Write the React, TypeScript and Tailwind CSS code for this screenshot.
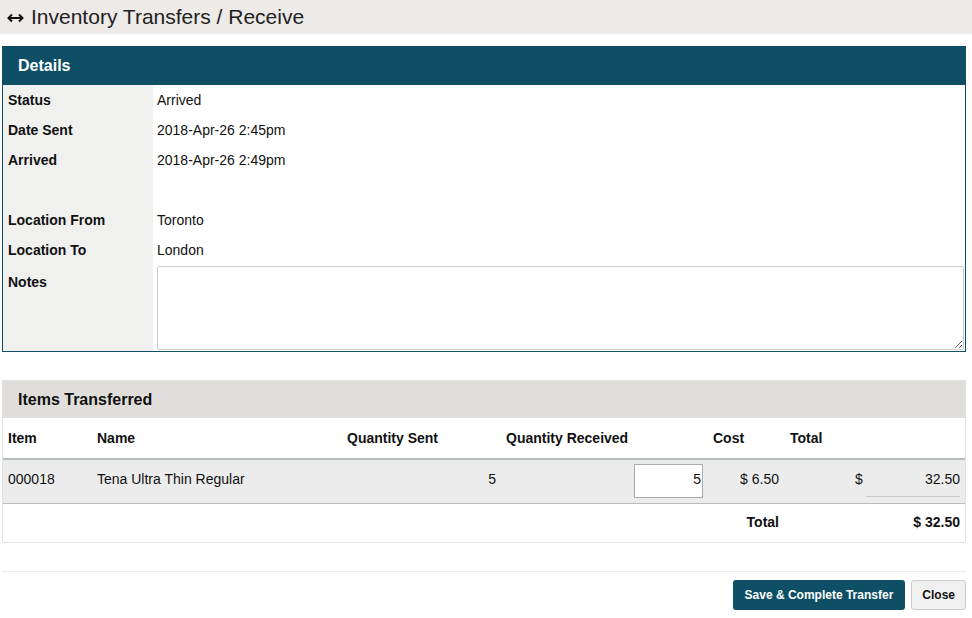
const details: [string, string][] = [
  ["Status", "Arrived"],
  ["Date Sent", "2018-Apr-26 2:45pm"],
  ["Arrived", "2018-Apr-26 2:49pm"],
  ["", ""],
  ["Location From", "Toronto"],
  ["Location To", "London"],
];

function SwapArrow() {
  return (
    <svg width="17" height="10" viewBox="0 0 17 10" className="mr-[7px] mt-[2px]">
      <path d="M1.5 5h14M5 1.5L1.5 5 5 8.5M12 1.5l3.5 3.5L12 8.5" fill="none" stroke="#111" strokeWidth="2" />
    </svg>
  );
}

export default function App() {
  return (
    <div className="w-[972px] h-[618px] bg-white text-[14px] text-[#111] font-['Liberation_Sans',Arial,sans-serif]">
      {/* Page title */}
      <div className="h-[34px] bg-[#edeae7] flex items-center pl-[7px] text-[21px] text-[#222]">
        <SwapArrow />
        Inventory Transfers / Receive
      </div>

      {/* Details panel */}
      <div className="mt-[12px] ml-[2px] w-[964px] border border-[#0e4f66]">
        <div className="h-[38px] bg-[#0e4f66] flex items-center pl-[15px] text-white font-bold text-[16px]">
          Details
        </div>
        <div className="flex">
          <div className="w-[150px] bg-[#f0f0ef] shrink-0">
            {details.map(([label], i) => (
              <div key={i} className="h-[30px] flex items-center pl-[5px] font-bold">
                {label}
              </div>
            ))}
            <div className="h-[86px] pl-[5px] pt-[7px] font-bold">Notes</div>
          </div>
          <div className="flex-1 pl-[4px] pr-[2px]">
            {details.map(([, value], i) => (
              <div key={i} className="h-[30px] flex items-center">
                {value}
              </div>
            ))}
            <textarea className="block w-[807px] h-[84px] mt-[1px] mb-[1px] border border-[#ccc] rounded-[2px] resize-y" />
          </div>
        </div>
      </div>

      {/* Items panel */}
      <div className="mt-[28px] ml-[2px] w-[964px] border border-[#e2e2e2]">
        <div className="h-[37px] bg-[#dfdeda] flex items-center pl-[15px] font-bold text-[16px]">
          Items Transferred
        </div>
        <table className="w-full border-collapse">
          <thead>
            <tr className="h-[41px] border-b-2 border-[#b6bdbf] text-left">
              <th className="w-[88px] pl-[5px] font-bold">Item</th>
              <th className="w-[250px] pl-[6px] font-bold">Name</th>
              <th className="w-[159px] pl-[6px] font-bold">Quantity Sent</th>
              <th className="w-[207px] pl-[6px] font-bold">Quantity Received</th>
              <th className="w-[77px] pl-[6px] font-bold">Cost</th>
              <th className="pl-[6px] font-bold">Total</th>
            </tr>
          </thead>
          <tbody>
            <tr className="h-[44px] bg-[#ececec] border-b border-[#b6bdbf]">
              <td className="pl-[5px] align-top pt-[9px]">000018</td>
              <td className="pl-[6px] align-top pt-[9px]">Tena Ultra Thin Regular</td>
              <td className="pr-[4px] text-right align-top pt-[9px]">5</td>
              <td className="pr-[4px] text-right">
                <input
                  readOnly
                  value="5"
                  className="w-[69px] h-[34px] bg-white border border-[#aaa] text-right pr-[1px] pb-[5px]"
                />
              </td>
              <td className="pr-[5px] text-right align-top pt-[9px]">$ 6.50</td>
              <td className="pr-[5px] align-top pt-[9px]">
                <div className="flex items-start">
                  <span className="ml-[71px] w-[11px]">$</span>
                  <span className="flex-1 text-right border-b border-[#ccc] pb-[6px]">32.50</span>
                </div>
              </td>
            </tr>
            <tr className="h-[39px] font-bold">
              <td colSpan={5} className="pr-[5px] text-right">Total</td>
              <td className="pr-[5px] text-right">$ 32.50</td>
            </tr>
          </tbody>
        </table>
      </div>

      {/* Footer actions */}
      <div className="mt-[28px] ml-[2px] w-[964px] border-t border-[#eee] pt-[8px] flex justify-end gap-[6px]">
        <button className="h-[30px] px-[12px] bg-[#0e4f66] text-white font-bold text-[12px] rounded-[3px]">
          Save &amp; Complete Transfer
        </button>
        <button className="h-[30px] px-[10px] bg-[#f0f0f0] border border-[#ccc] font-bold text-[12px] rounded-[3px]">
          Close
        </button>
      </div>
    </div>
  );
}
